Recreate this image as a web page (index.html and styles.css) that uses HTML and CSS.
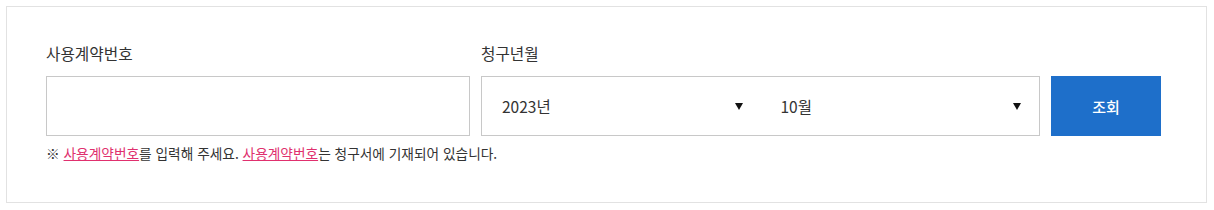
FILE: index.html
```html
<!DOCTYPE html>
<html lang="ko">

<head>
    <meta charset="UTF-8" />
    <meta name="viewport" content="width=device-width,initial-scale=1.0" />
    <title>청구서 조회</title>
    <link rel="stylesheet" href="styles.css">
</head>

<body>
    <div class="search-box">
        <div class="search-row">
            <div class="field field-contract">
                <label class="field-label" for="contract-no">사용계약번호</label>
                <input class="text-input" type="text" id="contract-no" />
            </div>
            <div class="field field-date">
                <div class="field-label">청구년월</div>
                <div class="select-group">
                    <div class="select-item">
                        <span>2023년</span>
                        <span class="arrow"></span>
                    </div>
                    <div class="select-item">
                        <span>10월</span>
                        <span class="arrow"></span>
                    </div>
                </div>
            </div>
            <button class="search-btn">조회</button>
        </div>
        <p class="notice">
            ※ <a href="#">사용계약번호</a>를 입력해 주세요. <a href="#">사용계약번호</a>는 청구서에 기재되어 있습니다.
        </p>
    </div>
</body>

</html>
```

FILE: styles.css
```css
* {
    margin: 0;
    padding: 0;
    box-sizing: border-box;
}

body {
    padding: 6px;
    font-family: "Noto Sans CJK KR", "Noto Sans", sans-serif;
    color: #333;
    background: #fff;
}

.search-box {
    width: 1201px;
    height: 197px;
    border: 1px solid #e2e2e2;
    padding: 36px 44px 0 39px;
}

.search-row {
    display: flex;
    align-items: flex-end;
    gap: 11px;
}

.field-label {
    display: block;
    font-size: 15.7px;
    line-height: 22px;
    margin-bottom: 11px;
    color: #333;
}

.field-contract {
    width: 424px;
}

.text-input {
    display: block;
    width: 100%;
    height: 60px;
    border: 1px solid #c8c8c8;
    outline: none;
    font-size: 15px;
    padding: 0 20px;
}

.field-date {
    width: 559px;
}

.select-group {
    display: flex;
    height: 60px;
    border: 1px solid #c8c8c8;
}

.select-item {
    flex: 1;
    display: flex;
    align-items: center;
    justify-content: space-between;
    padding: 0 18px 0 20px;
    font-size: 15.5px;
    color: #333;
}

.arrow {
    width: 0;
    height: 0;
    border-left: 4px solid transparent;
    border-right: 4px solid transparent;
    border-top: 7px solid #111;
}

.search-btn {
    width: 110px;
    height: 60px;
    border: none;
    background: #1e6fca;
    color: #fff;
    font-family: inherit;
    font-size: 15px;
    font-weight: 500;
    cursor: pointer;
}

.notice {
    margin-top: 8px;
    font-size: 13.7px;
    line-height: 18px;
    color: #333;
}

.notice a {
    color: #e0306e;
    text-decoration: underline;
}
```
